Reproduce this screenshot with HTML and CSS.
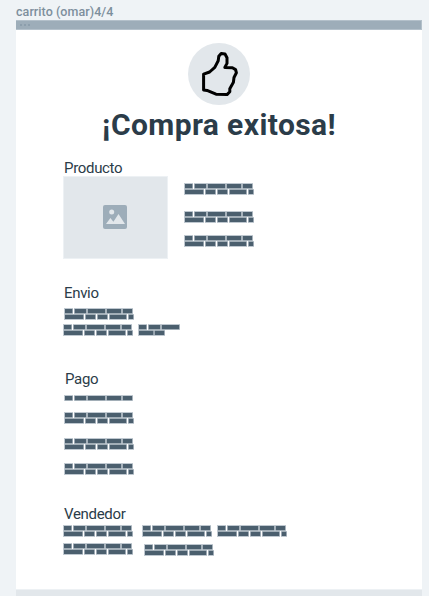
FILE: index.html
```html
<!DOCTYPE html>
<html lang="es">
<head>
<meta charset="utf-8">
<title>carrito</title>
<link rel="stylesheet" href="styles.css">
</head>
<body>
<svg class="defs" aria-hidden="true">
  <symbol id="row" viewBox="0 0 70 6">
    <path class="edge" d="M0 0h9v6H0zM10 0h13v6H10zM23 0h19v6H23zM42 0h16v6H42zM58 0h11v6H58z"/>
    <path class="fill" d="M1 1h7.4v4.3H1zM10.7 1h11.5v4.3H10.7zM23.8 1h17.4v4.3H23.8zM42.8 1h14.4v4.3H42.8zM58.8 1h9.4v4.3H58.8z"/>
  </symbol>
  <symbol id="lines" viewBox="0 0 70 12">
    <path class="edge" d="M0 0h9v6H0zM10 0h13v6H10zM23 0h19v6H23zM42 0h16v6H42zM58 0h11v6H58zM0 6h20v6H0zM21 6h11v6H21zM33 6h11v6H33zM45 6h18v6H45zM64 6h6v6H64z"/>
    <path class="fill" d="M1 1h7.4v4.3H1zM10.7 1h11.5v4.3H10.7zM23.8 1h17.4v4.3H23.8zM42.8 1h14.4v4.3H42.8zM58.8 1h9.4v4.3H58.8zM1 6.8h18.4v4.3H1zM21.7 6.8h9.6v4.3h-9.6zM33.7 6.8h9.6v4.3h-9.6zM45.7 6.8h16.6v4.3H45.7zM64.7 6.8h4.6v4.3h-4.6z"/>
  </symbol>
  <symbol id="short" viewBox="0 0 42 12">
    <path class="edge" d="M0 0h9v6H0zM10 0h13v6H10zM23 0h19v6H23zM0 6h16v6H0zM16 6h11v6H16z"/>
    <path class="fill" d="M1 1h7.4v4.3H1zM10.7 1h11.5v4.3H10.7zM23.8 1h17.4v4.3H23.8zM1 6.8h14.4v4.3H1zM16.7 6.8h9.6v4.3h-9.6z"/>
  </symbol>
</svg>
<div class="caption"><span class="caption-text">carrito (omar)4/4</span></div>
<main class="frame">
  <div class="bar"><i></i><i></i><i></i></div>
  <header class="hero">
    <svg class="thumb" viewBox="0 0 62 62">
      <circle cx="31" cy="31" r="31"/>
      <path d="M15.6 31.2V47l3.4.4 9 3.8 11 .4 2.8-2.8v-3l1.8-3.2 1.8-3.4.6-4.7 2.4-4.7-.8-3.2-3.2-1.8-7.6-.4 2.2-4V14.8l-2-3.8-3.8-.6-2.4 2.8-.6 4.6-3.4 6.6-5.2 4.6z"/>
    </svg>
    <h1>¡Compra exitosa!</h1>
  </header>

  <section class="producto">
    <h2>Producto</h2>
    <div class="product">
      <div class="image">
        <svg viewBox="0 0 24 24" width="24" height="24">
          <rect class="pic" width="24" height="24" rx="2"/>
          <circle class="cut" cx="8.7" cy="7" r="2.5"/>
          <path class="cut" d="M3 19l4.4-6 3 3.7L15.5 9 22 19z"/>
        </svg>
      </div>
      <div class="details">
        <svg class="lines"><use href="#lines"/></svg>
        <svg class="lines"><use href="#lines"/></svg>
        <svg class="lines"><use href="#lines"/></svg>
      </div>
    </div>
  </section>

  <section class="envio">
    <h2>Envio</h2>
    <svg class="lines"><use href="#lines"/></svg>
    <div class="group">
      <svg class="lines"><use href="#lines"/></svg>
      <svg class="short"><use href="#short"/></svg>
    </div>
  </section>

  <section class="pago">
    <h2>Pago</h2>
    <svg class="row"><use href="#row"/></svg>
    <svg class="lines"><use href="#lines"/></svg>
    <svg class="lines"><use href="#lines"/></svg>
    <svg class="lines"><use href="#lines"/></svg>
  </section>

  <section class="vendedor">
    <h2>Vendedor</h2>
    <div class="group">
      <svg class="lines"><use href="#lines"/></svg>
      <svg class="lines"><use href="#lines"/></svg>
      <svg class="lines"><use href="#lines"/></svg>
    </div>
    <div class="group second">
      <svg class="lines"><use href="#lines"/></svg>
      <svg class="lines"><use href="#lines"/></svg>
    </div>
  </section>
  <footer class="foot"></footer>
</main>
</body>
</html>
```
FILE: styles.css
```css
* { box-sizing: border-box; }
body {
  margin: 0;
  height: 596px;
  overflow: hidden;
  background: #eff3f6;
  color: #2b3c49;
  font-family: Roboto, "Liberation Sans", sans-serif;
}
svg { display: block; flex: none; }
.defs { width: 0; height: 0; position: absolute; }
.edge { fill: #bfc8d0; }
.fill { fill: #4b5f6e; }

.caption {
  height: 20px;
  padding-left: 16px;
  font-size: 12.5px;
  font-weight: 500;
  line-height: 23px;
  letter-spacing: .06px;
  color: #7d8f9d;
  white-space: nowrap;
}
.frame {
  width: 406px;
  height: 576px;
  margin-left: 16px;
  background: #fff;
  display: flex;
  flex-direction: column;
}
.bar {
  height: 10px;
  padding: 4px 0 0 4px;
  display: flex;
  gap: 2px;
  background: #9dadb9;
  border: 1px solid #b3c0ca;
  border-width: 1px 1px 1px 0;
}
.bar i {
  width: 2px;
  height: 2px;
  margin-top: -1px;
  background: #8c9eac;
}
.hero {
  height: 130px;
  padding-top: 13px;
}
.thumb {
  width: 62px;
  height: 62px;
  margin-left: 172px;
}
.thumb circle { fill: #e2e7eb; }
.thumb path {
  fill: none;
  stroke: #000;
  stroke-width: 3;
  stroke-linejoin: round;
}
h1 {
  margin: 3px 0 0 86px;
  font-size: 30px;
  line-height: 34px;
  font-weight: 700;
  letter-spacing: .4px;
  white-space: nowrap;
}
h2 {
  margin: 0 0 0 1px;
  height: 16px;
  font-size: 15px;
  line-height: 16px;
  font-weight: 400;
  letter-spacing: -.32px;
  white-space: nowrap;
}
section { padding-left: 47px; }
.lines { width: 70px; height: 12px; }
.row { width: 70px; height: 6px; }
.short { width: 42px; height: 12px; }
.group { display: flex; }

.producto { height: 125px; }
.product { display: flex; }
.image {
  width: 105px;
  height: 83px;
  padding: 0 1px 1px 0;
  display: grid;
  place-items: center;
  background: #e2e7eb;
  border: 1px solid #edf1f4;
}
.pic { fill: #9dadb9; }
.cut { fill: #e2e7eb; }
.details { padding: 7px 0 0 16px; }
.details .lines + .lines { margin-top: 16px; }
.details .lines:last-child { margin-top: 12px; }

.envio { height: 86px; }
.envio h2 { height: 23px; }
.envio > .lines { margin-left: 1px; }
.envio .group { margin-top: 4px; gap: 5px; }

.pago { height: 135px; }
.pago h2 { height: 24px; margin-left: 2px; }
.pago > svg { margin-left: 1px; }
.pago .row { margin-bottom: 11px; }
.pago .lines { margin-bottom: 14px; }
.pago .lines + .lines { margin-bottom: 13px; }

.vendedor { height: 83px; }
.vendedor h2 { height: 19px; }
.vendedor .group { gap: 9px; }
.vendedor .group .lines:last-child:nth-child(3) { margin-left: -4px; }
.vendedor .second { margin-top: 6px; gap: 11px; }
.vendedor .second .lines:last-child { margin-top: 1px; }

.foot {
  flex: 1;
  background: #e2e7eb;
  border-top: 1px solid #edf1f4;
}
```
